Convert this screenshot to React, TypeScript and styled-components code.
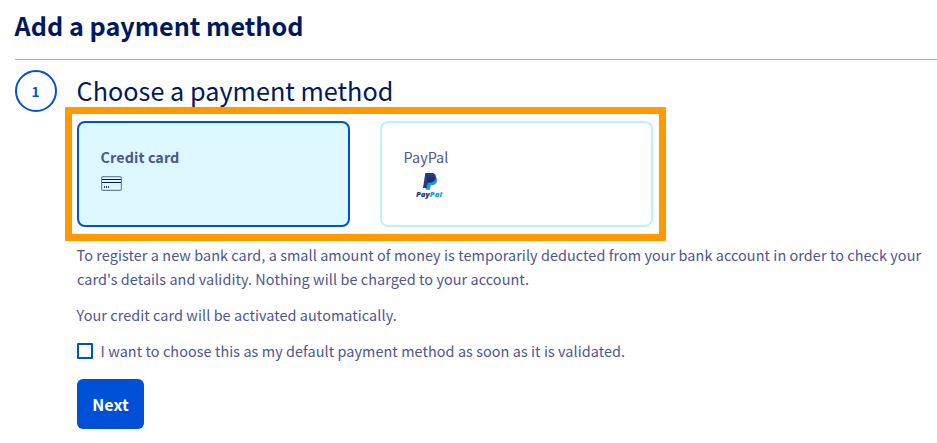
import React from "react";
import styled, { createGlobalStyle, css } from "styled-components";

const GlobalStyle = createGlobalStyle`
  * { box-sizing: border-box; }
  body {
    margin: 0;
    background: #fff;
    color: #4d5592;
    font: 400 14.4px/24px "Noto Sans CJK SC", "Noto Sans", sans-serif;
  }
`;

const Page = styled.main`
  width: 937px;
  height: 443px;
  padding: 0 0 0 15px;
  overflow: hidden;
`;

const PageHeader = styled.header`
  height: 60px;
  padding-top: 7px;
  border-bottom: 1px solid #b3b3b3;
`;

const Title = styled.h1`
  margin: 0;
  color: #00185e;
  font-size: 25.2px;
  line-height: 36px;
  font-weight: 700;
  text-indent: -0.4px;
  white-space: nowrap;
`;

const Step = styled.section`
  display: grid;
  grid-template-columns: 42px 1fr;
  column-gap: 20px;
  padding-top: 10px;
`;

const StepNumber = styled.span`
  display: flex;
  align-items: center;
  justify-content: center;
  width: 42px;
  height: 42px;
  padding-right: 1px;
  border: 2px solid #0050d7;
  border-radius: 50%;
  color: #0050d7;
  font-size: 13.6px;
  font-weight: 700;
`;

const StepTitle = styled.h2`
  margin: 0;
  height: 51px;
  padding-top: 2px;
  color: #00185e;
  font-size: 25.2px;
  line-height: 36px;
  font-weight: 400;
  letter-spacing: 0.03px;
  text-indent: -0.4px;
  white-space: nowrap;
`;

const Methods = styled.div`
  position: relative;
  display: flex;
  gap: 30px;
  width: 576px;
`;

const Highlight = styled.div`
  position: absolute;
  inset: -14px -13px -14px -12px;
  border: 7px solid #ff9900;
  border-radius: 1px;
  pointer-events: none;
`;

const MethodCard = styled.button<{ $selected?: boolean }>`
  flex: 1;
  display: flex;
  flex-direction: column;
  align-items: flex-start;
  height: 106px;
  padding: 22px;
  border: 2px solid #bef1ff;
  border-radius: 8px;
  background: #fff;
  color: inherit;
  font: inherit;
  text-indent: -0.4px;
  ${(p) =>
    p.$selected &&
    css`
      border-color: #0050d7;
      background: #def8ff;
      font-weight: 700;
      letter-spacing: 0.06px;
    `}
`;

const CardIcon = styled.svg`
  width: 21px;
  height: 15px;
  margin-top: 7px;
`;

const PayPalIcon = styled.svg`
  width: 28px;
  height: 27px;
  margin: 3px 0 0 12px;
`;

const Details = styled.p`
  margin: 0 0 12px;
  letter-spacing: 0.081px;
  text-indent: -0.4px;
  white-space: nowrap;
`;

const DetailsGroup = styled.div`
  padding-top: 16px;
`;

const CheckRow = styled.label`
  display: flex;
  align-items: center;
  gap: 8px;
  letter-spacing: 0.081px;
  text-indent: -0.4px;
  white-space: nowrap;
`;

const Checkbox = styled.input`
  appearance: none;
  width: 16px;
  height: 16px;
  margin: 0;
  border: 2px solid #0050d7;
  border-radius: 1px;
  background: #fff;
`;

const NextButton = styled.button`
  display: block;
  width: 67px;
  height: 50px;
  margin-top: 16px;
  padding: 0;
  border: 0;
  border-radius: 6px;
  background: #0050d7;
  color: #fff;
  font: 700 16px/24px "Noto Sans CJK SC", "Noto Sans", sans-serif;
`;

export default function App() {
  return (
    <>
      <GlobalStyle />
      <Page>
        <PageHeader>
          <Title>Add a payment method</Title>
        </PageHeader>
        <Step>
          <StepNumber>1</StepNumber>
          <div>
            <StepTitle>Choose a payment method</StepTitle>
            <Methods>
              <MethodCard $selected>
                <span>Credit card</span>
                <CardIcon viewBox="0 0 21 15" fill="none">
                  <rect x="0.6" y="0.6" width="19.8" height="13.8" rx="1.5" stroke="#6f859f" strokeWidth="1.2" />
                  <path d="M1 3.5h19M1 6.5h19" stroke="#00184f" />
                  <path d="M3.5 10v2M5.5 10v2M7.5 10v2" stroke="#2b4066" />
                </CardIcon>
              </MethodCard>
              <MethodCard>
                <span>PayPal</span>
                <PayPalIcon viewBox="0 0 28 27">
                  <path d="M11 5h8.500c1.500.9 1.900 2.300 1.500 4.200-.7 2.900-2.600 4-5.300 4h-1l-.8 4.600H9.700z" fill="#179bd7" />
                  <path d="M9.300 1h6.200c3.200 0 4.800 1.600 4.200 4.600-.7 3.600-3 4.900-6 4.900h-2L10.600 16H7z" fill="#253b80" />
                  <path d="M11.700 5h7.900c.4 3.500-2.600 5.500-5.900 5.500h-2.900z" fill="#222d65" />
                  <text
                    x="0"
                    y="25"
                    fontFamily="Open Sans, sans-serif"
                    fontSize="7.6"
                    fontWeight="800"
                    fontStyle="italic"
                    textLength="26"
                    lengthAdjust="spacingAndGlyphs"
                    letterSpacing="0"
                    fill="#253b80"
                  >
                    Pay<tspan fill="#179bd7">Pal</tspan>
                  </text>
                </PayPalIcon>
              </MethodCard>
              <Highlight />
            </Methods>
            <DetailsGroup>
              <Details>
                To register a new bank card, a small amount of money is temporarily deducted from your bank account in order to check your
                <br />
                card's details and validity. Nothing will be charged to your account.
              </Details>
              <Details>Your credit card will be activated automatically.</Details>
              <CheckRow>
                <Checkbox type="checkbox" />
                <span>I want to choose this as my default payment method as soon as it is validated.</span>
              </CheckRow>
            </DetailsGroup>
            <NextButton>Next</NextButton>
          </div>
        </Step>
      </Page>
    </>
  );
}
